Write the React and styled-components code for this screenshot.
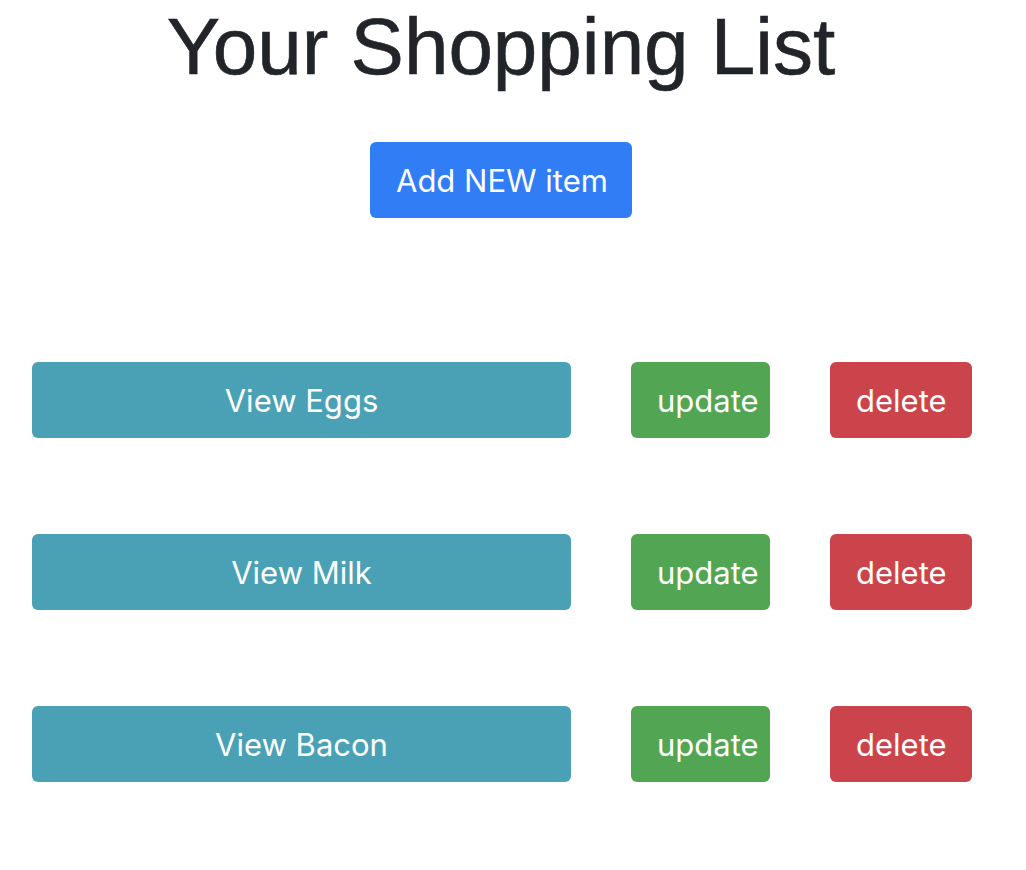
import React from "react";
import styled, { createGlobalStyle, css } from "styled-components";

const GlobalStyle = createGlobalStyle`
  html, body {
    margin: 0;
    padding: 0;
    background: #ffffff;
  }
  body {
    font-family: Inter, "Liberation Sans", Arial, sans-serif;
  }
`;

const items = [
  { id: 1, name: "Eggs" },
  { id: 2, name: "Milk" },
  { id: 3, name: "Bacon" },
];

const colors = {
  primary: "#317df5",
  info: "#4aa1b6",
  success: "#52a552",
  danger: "#cc444b",
};

function App() {
  return (
    <Page>
      <GlobalStyle />
      <Title>Your Shopping List</Title>
      <AddWrap>
        <Button variant="primary" width="262px">
          Add NEW item
        </Button>
      </AddWrap>
      <List>
        {items.map((item) => (
          <Row key={item.id}>
            <Button variant="info" width="539px">
              View {item.name}
            </Button>
            <Button variant="success" width="139px" left>
              update
            </Button>
            <Button variant="danger" width="142px">
              delete
            </Button>
          </Row>
        ))}
      </List>
    </Page>
  );
}

export default App;

const Page = styled.div`
  width: 1002px;
  padding-bottom: 80px;
`;

const Title = styled.h1`
  margin: 0;
  text-align: center;
  font-family: "Liberation Sans", Arial, sans-serif;
  font-weight: 400;
  font-size: 80px;
  line-height: 94px;
  color: #212529;
  -webkit-text-stroke: 0.6px #212529;
`;

const AddWrap = styled.div`
  display: flex;
  justify-content: center;
  margin-top: 48px;
`;

const List = styled.div`
  display: flex;
  flex-direction: column;
  gap: 96px;
  margin-top: 144px;
  padding-left: 32px;
`;

const Row = styled.div`
  display: flex;
  gap: 60px;
`;

const Button = styled.button`
  box-sizing: border-box;
  width: ${(p) => p.width};
  height: 76px;
  padding: 0 26px;
  border: none;
  border-radius: 6px;
  background: ${(p) => colors[p.variant]};
  color: #ffffff;
  font-family: Inter, "Liberation Sans", Arial, sans-serif;
  font-size: 31px;
  font-weight: 400;
  white-space: nowrap;
  text-align: center;
  cursor: pointer;

  ${(p) =>
    p.left &&
    css`
      text-align: left;
    `}
`;
